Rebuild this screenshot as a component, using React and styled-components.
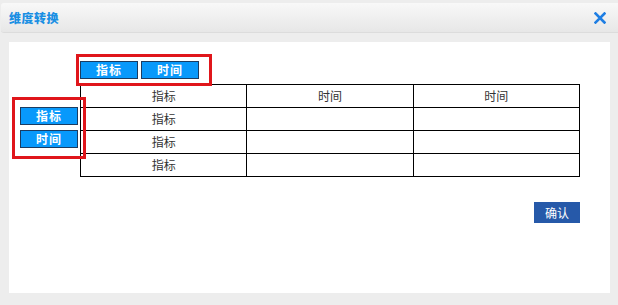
import React from "react";
import styled, { createGlobalStyle } from "styled-components";

const Global = createGlobalStyle`
  html, body { margin: 0; padding: 0; background: #ededed; }
  body { font-family: "Noto Sans CJK SC", "Liberation Sans", sans-serif; width: 618px; height: 305px; overflow: hidden; }
`;

const Dialog = styled.div`
  width: 618px;
  height: 305px;
  background: #ededed;
  padding-top: 3px;
  box-sizing: border-box;
`;

const Header = styled.div`
  margin-left: 1px;
  height: 30px;
  border-radius: 3px 0 0 3px;
  background: linear-gradient(#f8f8f8, #e7e7e7);
  border-bottom: 1px solid #dcdcdc;
  box-sizing: border-box;
  display: flex;
  align-items: center;
  justify-content: space-between;
  padding: 0 12px 0 8px;
`;

const Title = styled.span`
  color: #1a8fe3;
  font-size: 12px;
  font-weight: 900;
  letter-spacing: 0.5px;
  line-height: 1;
`;

const Close = styled.svg`
  width: 12px;
  height: 12px;
  display: block;
`;

const Panel = styled.div`
  margin: 9px 0 0 9px;
  width: 601px;
  height: 251px;
  background: #fff;
  box-sizing: border-box;
  padding-top: 12px;
`;

const Mark = styled.div`
  position: relative;
  z-index: 1;
  border: 3px solid #e0161b;
  display: flex;
  flex-direction: ${(p) => (p.$vertical ? "column" : "row")};
  gap: ${(p) => (p.$vertical ? "5px" : "3px")};
  padding: ${(p) => (p.$vertical ? "7px 5px 8px" : "4px 10px 4px 1px")};
  width: fit-content;
`;

const TopMark = styled(Mark)`
  margin-left: 67px;
`;

const DimButton = styled.button`
  width: 58px;
  height: 18px;
  margin: 0;
  padding: 0;
  background: #0899fb;
  border: 1px solid #1b3c61;
  color: #fff;
  font-family: "Noto Sans CJK SC", sans-serif;
  font-size: 12px;
  font-weight: bold;
  line-height: 16px;
  letter-spacing: 1px;
  cursor: pointer;
`;

const Row = styled.div`
  display: flex;
  align-items: flex-start;
  margin-top: -2px;
`;

const LeftMark = styled(Mark)`
  margin-left: 3px;
  margin-top: 13px;
`;

const Main = styled.div`
  margin-left: -6px;
  width: 500px;
  display: flex;
  flex-direction: column;
  align-items: flex-end;
`;

const Table = styled.table`
  width: 500px;
  border-collapse: collapse;
  table-layout: fixed;
`;

const Cell = styled.td`
  border: 1px solid #000;
  height: 22px;
  padding: 0;
  text-align: center;
  font-size: 12px;
  color: #333;
  line-height: 1;
`;

const Confirm = styled.button`
  margin-top: 25px;
  width: 46px;
  height: 21px;
  padding: 0;
  border: none;
  background: #2659a9;
  color: #fff;
  font-family: "Noto Sans CJK SC", sans-serif;
  font-size: 12px;
  cursor: pointer;
`;

const rows = [
  ["指标", "时间", "时间"],
  ["指标", "", ""],
  ["指标", "", ""],
  ["指标", "", ""],
];

export default function App() {
  return (
    <Dialog>
      <Global />
      <Header>
        <Title>维度转换</Title>
        <Close viewBox="0 0 12 12">
          <path d="M1.5 1.5 L10.5 10.5 M10.5 1.5 L1.5 10.5" stroke="#1e7ee3" strokeWidth="2.6" strokeLinecap="square" />
        </Close>
      </Header>
      <Panel>
        <TopMark>
          <DimButton>指标</DimButton>
          <DimButton>时间</DimButton>
        </TopMark>
        <Row>
          <LeftMark $vertical>
            <DimButton>指标</DimButton>
            <DimButton>时间</DimButton>
          </LeftMark>
          <Main>
            <Table>
              <tbody>
                {rows.map((r, i) => (
                  <tr key={i}>
                    {r.map((c, j) => (
                      <Cell key={j}>{c}</Cell>
                    ))}
                  </tr>
                ))}
              </tbody>
            </Table>
            <Confirm>确认</Confirm>
          </Main>
        </Row>
      </Panel>
    </Dialog>
  );
}
